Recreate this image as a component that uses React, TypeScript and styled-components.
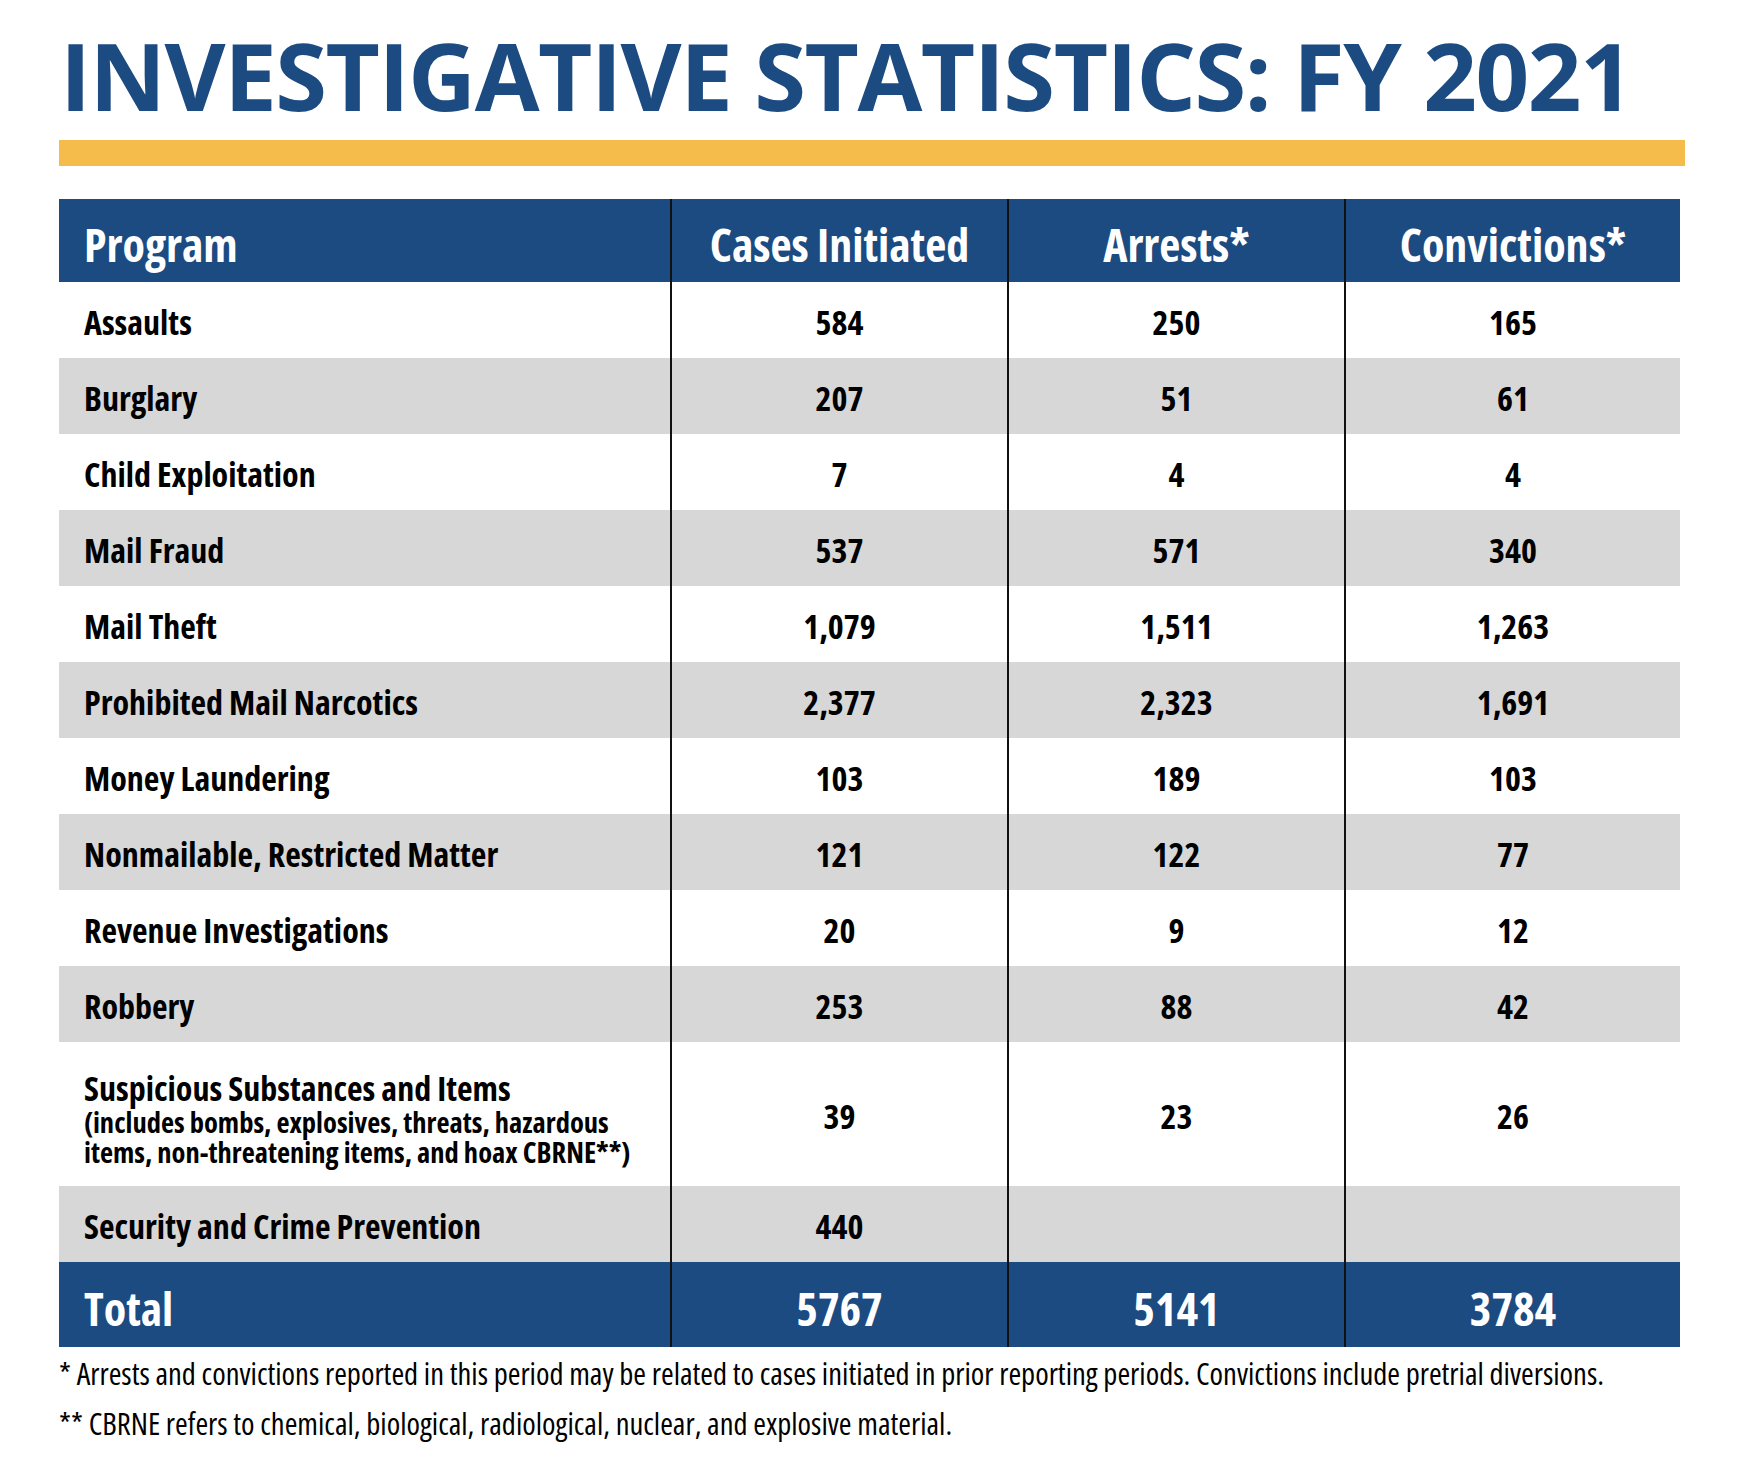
import React from "react";
import styled, { createGlobalStyle } from "styled-components";

const GlobalStyle = createGlobalStyle`
  html, body { margin: 0; padding: 0; background: #ffffff; }
  body { font-family: "Open Sans", "Noto Sans", sans-serif; color: #000; }
`;

const BLUE = "#1c4b82";
const GRAY = "#d7d7d7";
const YELLOW = "#f5bc4b";

const Page = styled.main`
  width: 1746px;
  padding: 28px 0 40px 59px;
  box-sizing: border-box;
`;

const Title = styled.h1`
  margin: 0 0 0 1px;
  font-family: "Open Sans", sans-serif;
  font-weight: 700;
  font-stretch: 100%;
  font-size: 94px;
  line-height: 94px;
  color: ${BLUE};
  letter-spacing: -1.5px;
  white-space: nowrap;
`;

const Rule = styled.div`
  width: 1626px;
  height: 26px;
  margin-top: 18px;
  background: ${YELLOW};
`;

const Table = styled.div`
  margin-top: 33px;
  width: 1621px;
  display: grid;
  grid-template-columns: 611px 337px 337px 336px;
`;

type Tone = "head" | "white" | "gray" | "total";

const bgFor = (t: Tone) =>
  t === "head" || t === "total" ? BLUE : t === "gray" ? GRAY : "#ffffff";

const Cell = styled.div<{
  $tone: Tone;
  $h: number;
  $first?: boolean;
  $big?: boolean;
  $tall?: boolean;
}>`
  height: ${(p) => p.$h}px;
  box-sizing: border-box;
  background: ${(p) => bgFor(p.$tone)};
  color: ${(p) => (p.$tone === "head" || p.$tone === "total" ? "#ffffff" : "#000000")};
  border-left: ${(p) => (p.$first ? "none" : "2px solid #111")};
  display: flex;
  flex-direction: column;
  justify-content: center;
  align-items: ${(p) => (p.$first ? "flex-start" : "center")};
  padding-left: ${(p) => (p.$first ? "25px" : "0")};
  padding-top: ${(p) => (p.$tall ? 10 : p.$big ? 6 : 4)}px;
  font-family: "Open Sans", sans-serif;
  font-weight: 700;
  font-stretch: 75%;
  font-size: ${(p) => (p.$big ? 46 : 34)}px;
  line-height: ${(p) => (p.$big ? 52 : 40)}px;
  white-space: nowrap;
`;

const MainLabel = styled.span`
  display: block;
  line-height: 34px;
  margin-bottom: 2px;
`;

const SubNote = styled.span`
  display: block;
  font-size: 28.5px;
  line-height: 30px;
`;

const Footnotes = styled.div`
  margin-top: 1px;
  font-family: "Open Sans", sans-serif;
  font-weight: 400;
  font-stretch: 75%;
  font-size: 30.7px;
  line-height: 50px;
  color: #000;
`;

const Footnote = styled.p`
  margin: 0;
  white-space: nowrap;
`;

type Row = { label: React.ReactNode; vals: string[]; h?: number };

const rows: Row[] = [
  { label: "Assaults", vals: ["584", "250", "165"] },
  { label: "Burglary", vals: ["207", "51", "61"] },
  { label: "Child Exploitation", vals: ["7", "4", "4"] },
  { label: "Mail Fraud", vals: ["537", "571", "340"] },
  { label: "Mail Theft", vals: ["1,079", "1,511", "1,263"] },
  { label: "Prohibited Mail Narcotics", vals: ["2,377", "2,323", "1,691"] },
  { label: "Money Laundering", vals: ["103", "189", "103"] },
  { label: "Nonmailable, Restricted Matter", vals: ["121", "122", "77"] },
  { label: "Revenue Investigations", vals: ["20", "9", "12"] },
  { label: "Robbery", vals: ["253", "88", "42"] },
  {
    label: (
      <>
        <MainLabel>Suspicious Substances and Items</MainLabel>
        <SubNote>(includes bombs, explosives, threats, hazardous</SubNote>
        <SubNote>items, non-threatening items, and hoax CBRNE**)</SubNote>
      </>
    ),
    vals: ["39", "23", "26"],
    h: 144,
  },
  { label: "Security and Crime Prevention", vals: ["440", "", ""] },
];

export default function App() {
  return (
    <Page>
      <GlobalStyle />
      <Title>INVESTIGATIVE STATISTICS: FY 2021</Title>
      <Rule />
      <Table>
        {["Program", "Cases Initiated", "Arrests*", "Convictions*"].map((h, i) => (
          <Cell key={h} $tone="head" $h={83} $first={i === 0} $big>
            {h}
          </Cell>
        ))}
        {rows.map((r, ri) => {
          const tone: Tone = ri % 2 === 0 ? "white" : "gray";
          const h = r.h ?? 76;
          const tall = h > 76;
          return (
            <React.Fragment key={ri}>
              <Cell $tone={tone} $h={h} $first $tall={tall}>
                {r.label}
              </Cell>
              {r.vals.map((v, vi) => (
                <Cell key={vi} $tone={tone} $h={h}>
                  {v}
                </Cell>
              ))}
            </React.Fragment>
          );
        })}
        {["Total", "5767", "5141", "3784"].map((t, i) => (
          <Cell key={t} $tone="total" $h={85} $first={i === 0} $big>
            {t}
          </Cell>
        ))}
      </Table>
      <Footnotes>
        <Footnote>
          * Arrests and convictions reported in this period may be related to cases initiated in prior reporting periods. Convictions include pretrial diversions.
        </Footnote>
        <Footnote>** CBRNE refers to chemical, biological, radiological, nuclear, and explosive material.</Footnote>
      </Footnotes>
    </Page>
  );
}
